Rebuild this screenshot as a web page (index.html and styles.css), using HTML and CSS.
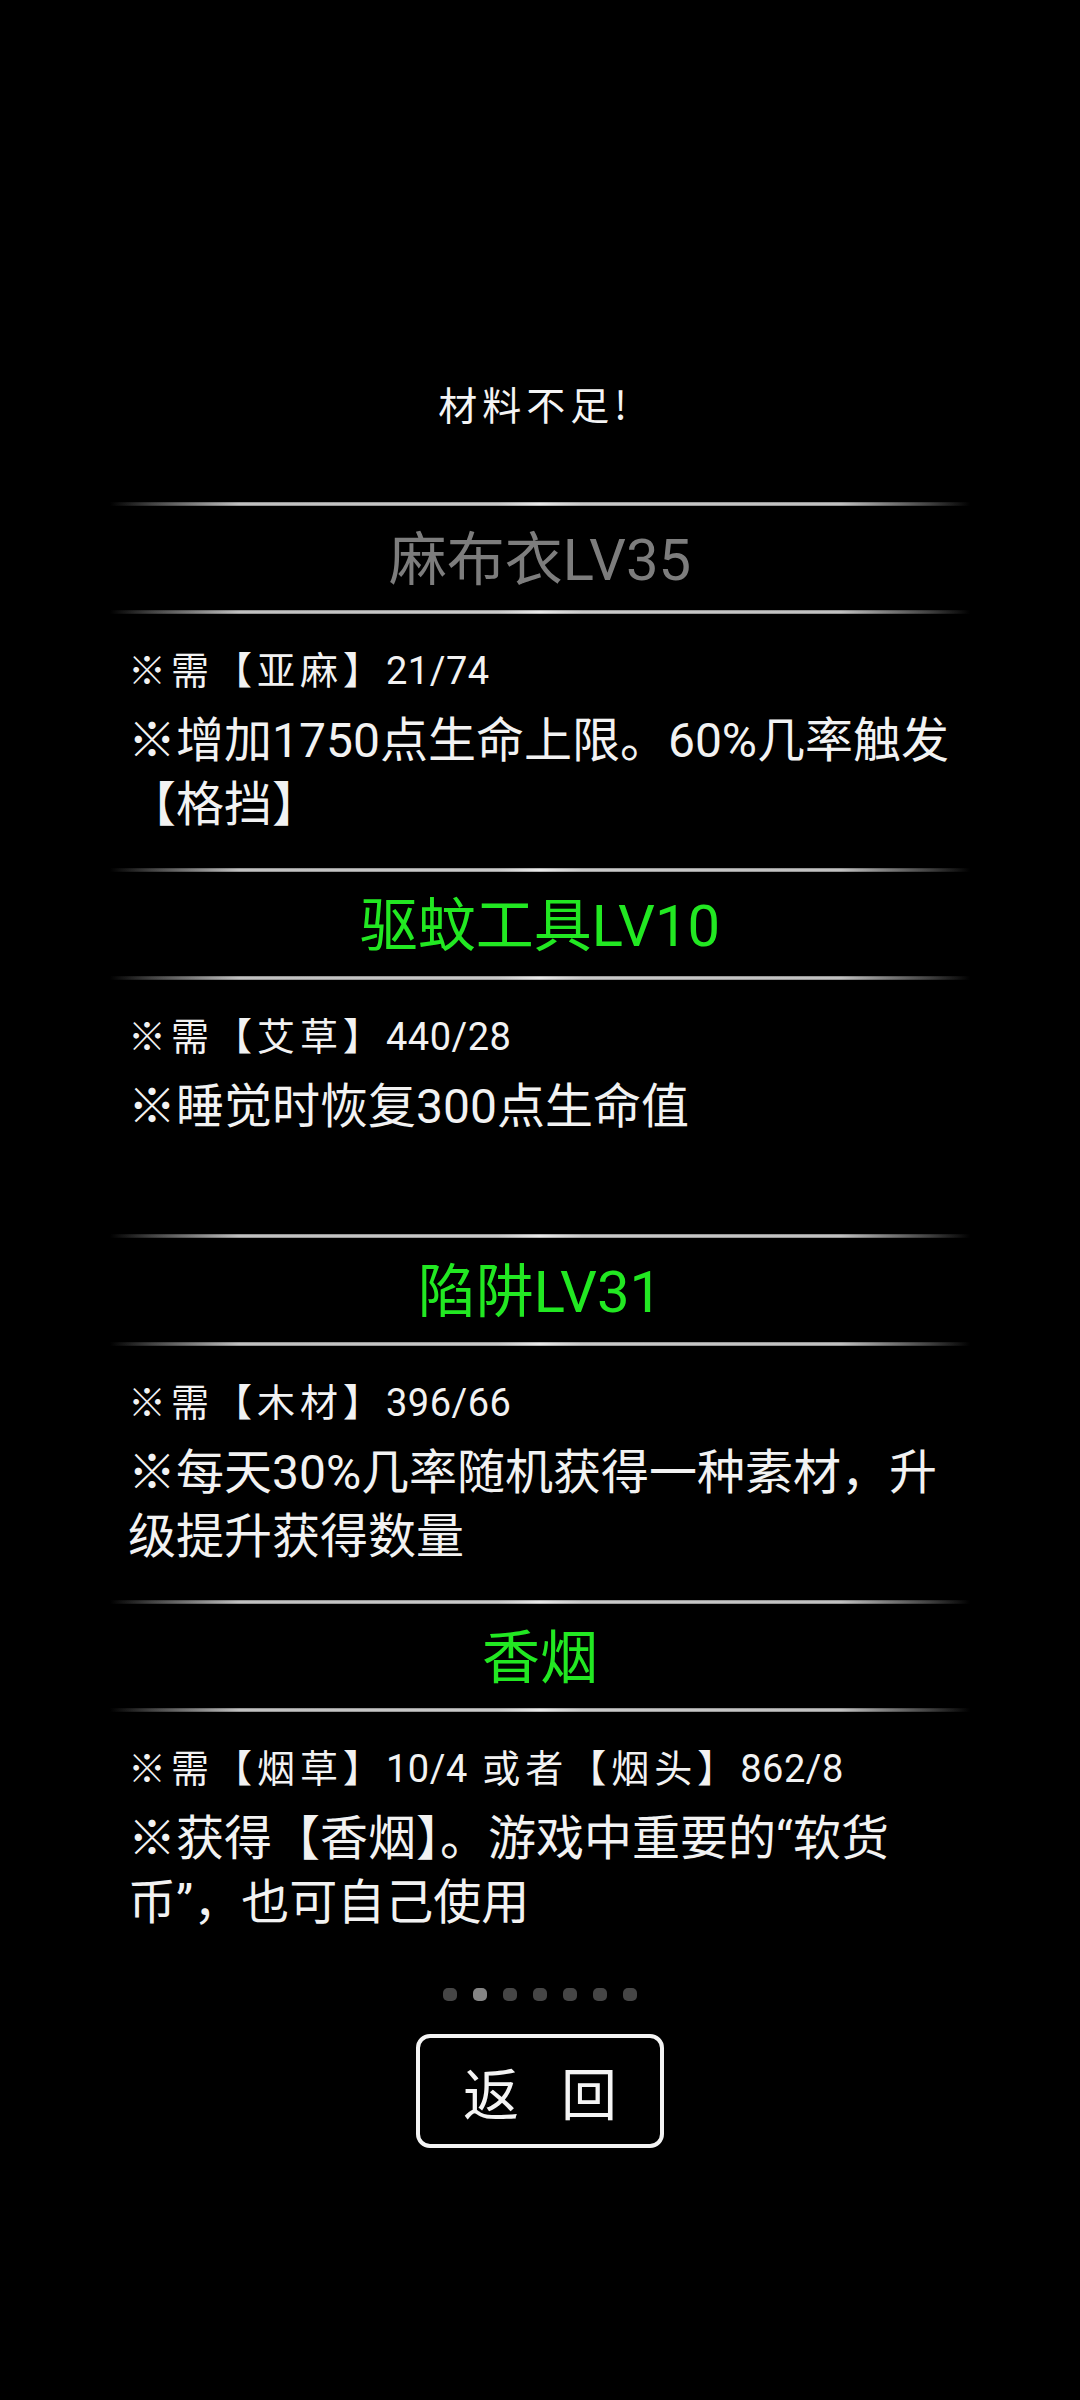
FILE: index.html
```html
<!DOCTYPE html>
<html lang="zh-CN">
<head>
<meta charset="utf-8">
<title>材料不足</title>
<link rel="stylesheet" href="styles.css">
</head>
<body>
<div class="page">
  <div class="toast">材料不足!</div>
  <div class="list">
    <section class="item">
      <div class="rule"></div>
      <h2 class="title gray">麻布衣LV35</h2>
      <div class="rule"></div>
      <div class="body">
        <p class="req">※需【亚麻】<span class="num">21/74</span></p>
        <p class="desc">※增加1750点生命上限。60%几率触发【格挡】</p>
      </div>
    </section>
    <section class="item">
      <div class="rule"></div>
      <h2 class="title green">驱蚊工具LV10</h2>
      <div class="rule"></div>
      <div class="body">
        <p class="req">※需【艾草】<span class="num">440/28</span></p>
        <p class="desc">※睡觉时恢复300点生命值</p>
      </div>
    </section>
    <section class="item">
      <div class="rule"></div>
      <h2 class="title green">陷阱LV31</h2>
      <div class="rule"></div>
      <div class="body">
        <p class="req">※需【木材】<span class="num">396/66</span></p>
        <p class="desc">※每天30%几率随机获得一种素材，升级提升获得数量</p>
      </div>
    </section>
    <section class="item">
      <div class="rule"></div>
      <h2 class="title green">香烟</h2>
      <div class="rule"></div>
      <div class="body">
        <p class="req">※需【烟草】<span class="num">10/4</span> 或者【烟头】<span class="num">862/8</span></p>
        <p class="desc">※获得【香烟】。游戏中重要的“软货币”，也可自己使用</p>
      </div>
    </section>
  </div>
  <div class="dots">
    <span class="dot"></span>
    <span class="dot on"></span>
    <span class="dot"></span>
    <span class="dot"></span>
    <span class="dot"></span>
    <span class="dot"></span>
    <span class="dot"></span>
  </div>
  <div class="actions">
    <button class="back" type="button"><span>返</span><span>回</span></button>
  </div>
</div>
</body>
</html>
```

FILE: styles.css
```css
html, body {
  margin: 0;
  padding: 0;
  background: #000;
}

body {
  width: 1080px;
  min-height: 2400px;
  color: #f2f2f2;
  font-family: "Roboto", "Noto Sans CJK SC", sans-serif;
}

.page {
  padding-top: 373px;
  display: flex;
  flex-direction: column;
  align-items: center;
}

.toast {
  font-family: "Noto Sans CJK SC", sans-serif;
  font-size: 39px;
  line-height: 60px;
  height: 60px;
  letter-spacing: 5px;
  color: #f4f4f4;
  text-align: center;
  padding-right: 10px;
}

.list {
  width: 860px;
  margin-top: 69px;
  display: flex;
  flex-direction: column;
}

.rule {
  height: 4px;
  background:
    linear-gradient(to bottom, rgba(0,0,0,0.35) 0%, rgba(0,0,0,0) 40%, rgba(0,0,0,0) 60%, rgba(0,0,0,0.35) 100%),
    linear-gradient(to right, rgba(200,200,200,0) 0%, rgba(200,200,200,0.35) 5%, #c4c4c4 15%, #cecece 45%, #efefef 50%, #cecece 55%, #c4c4c4 85%, rgba(200,200,200,0.35) 95%, rgba(200,200,200,0) 100%);
}

.title {
  margin: 0;
  height: 104px;
  box-sizing: border-box;
  padding-top: 4px;
  font-size: 58px;
  line-height: 100px;
  font-weight: 400;
  text-align: center;
}

.gray { color: #7d7d7d; }
.green { color: #22e822; }

.body {
  padding: 19px 0 31px 18px;
}

.req {
  margin: 0;
  font-size: 38px;
  line-height: 76px;
  letter-spacing: 5px;
}

.num {
  letter-spacing: 0.5px;
}

.desc {
  margin: 0;
  font-size: 48px;
  line-height: 64px;
  min-height: 128px;
}

.dots {
  margin-top: 22px;
  display: flex;
  gap: 16px;
}

.dot {
  width: 14px;
  height: 13px;
  border-radius: 5px;
  background: #464646;
}

.dot.on {
  background: #858585;
}

.actions {
  margin-top: 33px;
  display: flex;
  justify-content: center;
}

.back {
  width: 248px;
  height: 114px;
  box-sizing: border-box;
  border: 4px solid #f4f4f4;
  border-radius: 14px;
  background: #000;
  color: #f4f4f4;
  font-family: "Noto Sans CJK SC", sans-serif;
  font-size: 56px;
  line-height: 1;
  padding: 0;
  display: flex;
  align-items: center;
  justify-content: center;
  gap: 42px;
}
```
